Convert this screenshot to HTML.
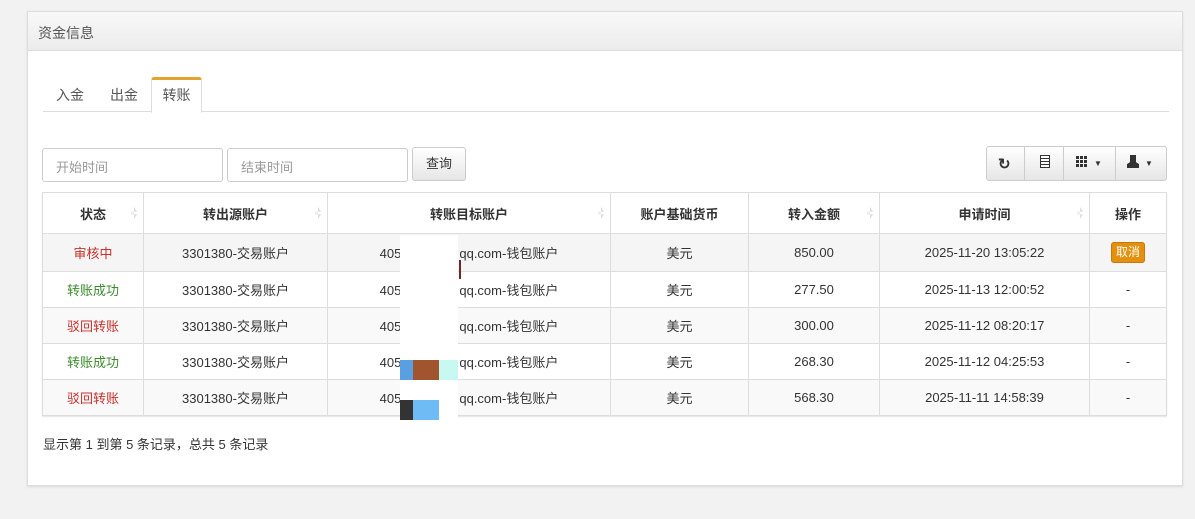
<!DOCTYPE html>
<html><head><meta charset="utf-8"><style>
*{box-sizing:border-box;margin:0;padding:0}
body{width:1195px;height:519px;background:#f2f2f2;font-family:"Liberation Sans","Noto Sans CJK SC",sans-serif;font-size:13px;color:#333;position:relative;overflow:hidden}
.panel{position:absolute;left:27px;top:11px;width:1156px;height:475px;background:#fff;border:1px solid #ddd;box-shadow:0 1px 2px rgba(0,0,0,.1)}
.ph{height:39px;background:linear-gradient(#f8f8f8,#ececec);border-bottom:1px solid #ddd;padding:11px 10px;font-size:14px;color:#555}
.tabs{position:absolute;left:15px;top:65px;width:1126px;height:35px;border-bottom:1px solid #ddd}
.tab{position:absolute;top:0;height:35px;line-height:36px;font-size:14px;color:#555}
.tab.a{left:108px;width:51px;text-align:center;border:1px solid #ddd;border-bottom:1px solid #fff;border-top:3px solid #e3a32c;background:#fff;line-height:31px;height:36px;border-radius:3px 3px 0 0}
.inp{position:absolute;top:148px;width:181px;height:34px;border:1px solid #ccc;border-radius:3px;padding:8px 13px;color:#999;font-size:13px}
.btn{position:absolute;top:147px;height:34px;border:1px solid #ccc;border-radius:3px;background:linear-gradient(#fff,#e6e6e6);font-size:13px;text-align:center;line-height:32px}
table{position:absolute;left:42px;top:192px;width:1125px;border-collapse:collapse;border:1px solid #ddd;box-shadow:0 1px 1px rgba(0,0,0,.1)}
td,th{border:1px solid #ddd;text-align:center;font-size:13px;height:36px}
th{height:41px;font-weight:bold;position:relative}
th.s:after{content:"";position:absolute;right:6px;top:14px;width:6px;height:12px;background:linear-gradient(#ddd 0 45%,transparent 45% 55%,#ddd 55%);clip-path:polygon(50% 0,100% 40%,0 40%,0 60%,100% 60%,50% 100%)}
tr.g td{background:#f5f5f5}
.r{color:#c9302c}.gr{color:#3c8a2e}
.x{display:inline-block;background:#e3900e;color:#fff;border:1px solid #c57a08;border-radius:3px;padding:0 4px;font-size:12px;line-height:19px}
</style></head><body>
<div class="panel"><div class="ph">资金信息</div>
<div class="tabs"><div class="tab" style="left:13px">入金</div><div class="tab" style="left:67px">出金</div><div class="tab a">转账</div></div>
</div>
<div class="inp" style="left:42px">开始时间</div>
<div class="inp" style="left:227px">结束时间</div>
<div class="btn" style="left:412px;width:54px">查询</div>
<div class="btn" style="left:986px;width:181px;top:146px;height:35px"></div>
<div style="position:absolute;left:1024px;top:147px;width:1px;height:33px;background:#ccc"></div>
<div style="position:absolute;left:1063px;top:147px;width:1px;height:33px;background:#ccc"></div>
<div style="position:absolute;left:1115px;top:147px;width:1px;height:33px;background:#ccc"></div>
<div style="position:absolute;left:998px;top:155px;font-size:15px;font-weight:bold">↻</div>
<div style="position:absolute;left:1040px;top:155px;width:10px;height:13px;border:1.5px solid #333;background:repeating-linear-gradient(#fff 0 2px,#333 2px 3px)"></div>
<div style="position:absolute;left:1076px;top:156px;width:11px;height:11px;background:repeating-linear-gradient(90deg,#333 0 3px,transparent 3px 4px);-webkit-mask:repeating-linear-gradient(#000 0 3px,transparent 3px 4px)"></div>
<div style="position:absolute;left:1094px;top:159px;font-size:8px">▼</div>
<div style="position:absolute;left:1127px;top:155px;width:12px;height:13px;background:#333;clip-path:polygon(25% 0,75% 0,75% 55%,100% 70%,100% 100%,0 100%,0 70%,25% 55%)"></div>
<div style="position:absolute;left:1145px;top:159px;font-size:8px">▼</div>
<table>
<tr><th class="s" style="width:101px">状态</th><th class="s" style="width:184px">转出源账户</th><th class="s" style="width:283px">转账目标账户</th><th style="width:138px">账户基础货币</th><th class="s" style="width:131px">转入金额</th><th class="s" style="width:210px">申请时间</th><th>操作</th></tr>
<tr class="g"><td class="r" style="height:38px">审核中</td><td>3301380-交易账户</td><td>405<span style="display:inline-block;width:58px"></span>qq.com-钱包账户</td><td>美元</td><td>850.00</td><td>2025-11-20 13:05:22</td><td><span class="x">取消</span></td></tr>
<tr><td class="gr">转账成功</td><td>3301380-交易账户</td><td>405<span style="display:inline-block;width:58px"></span>qq.com-钱包账户</td><td>美元</td><td>277.50</td><td>2025-11-13 12:00:52</td><td>-</td></tr>
<tr class="g"><td class="r" style="background:#f9f9f9">驳回转账</td><td style="background:#f9f9f9">3301380-交易账户</td><td style="background:#f9f9f9">405<span style="display:inline-block;width:58px"></span>qq.com-钱包账户</td><td style="background:#f9f9f9">美元</td><td style="background:#f9f9f9">300.00</td><td style="background:#f9f9f9">2025-11-12 08:20:17</td><td style="background:#f9f9f9">-</td></tr>
<tr><td class="gr">转账成功</td><td>3301380-交易账户</td><td>405<span style="display:inline-block;width:58px"></span>qq.com-钱包账户</td><td>美元</td><td>268.30</td><td>2025-11-12 04:25:53</td><td>-</td></tr>
<tr class="g"><td class="r" style="background:#f9f9f9">驳回转账</td><td style="background:#f9f9f9">3301380-交易账户</td><td style="background:#f9f9f9">405<span style="display:inline-block;width:58px"></span>qq.com-钱包账户</td><td style="background:#f9f9f9">美元</td><td style="background:#f9f9f9">568.30</td><td style="background:#f9f9f9">2025-11-11 14:58:39</td><td style="background:#f9f9f9">-</td></tr>
</table>
<div style="position:absolute;left:400px;top:235px;width:58px;height:185px;background:#fff"></div>
<div style="position:absolute;left:459px;top:260px;width:2px;height:19px;background:#6a2a2a"></div>
<div style="position:absolute;left:400px;top:360px;width:13px;height:20px;background:#5aa0e0"></div>
<div style="position:absolute;left:413px;top:360px;width:26px;height:20px;background:#a0552e"></div>
<div style="position:absolute;left:439px;top:360px;width:19px;height:20px;background:#c8f8f2"></div>
<div style="position:absolute;left:400px;top:400px;width:13px;height:20px;background:#333"></div>
<div style="position:absolute;left:413px;top:400px;width:26px;height:20px;background:#6ebbf5"></div>
<div style="position:absolute;left:43px;top:434px;font-size:13px">显示第 1 到第 5 条记录，总共 5 条记录</div>
</body></html>
